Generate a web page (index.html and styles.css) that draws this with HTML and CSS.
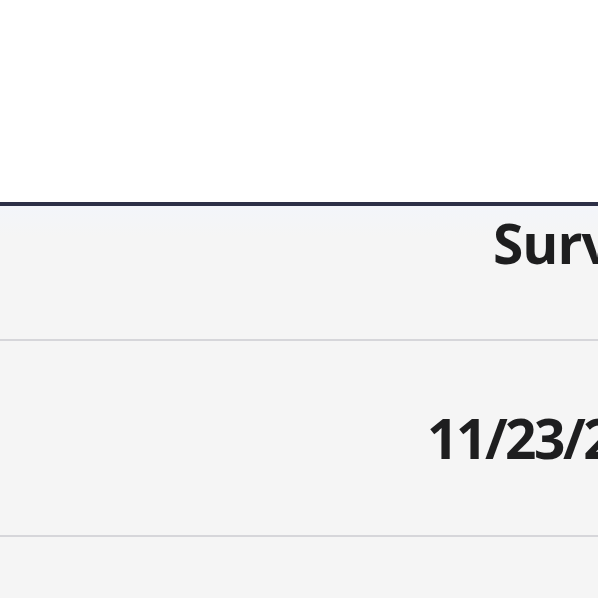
FILE: index.html
```html
<!DOCTYPE html>
<html lang="en">
<head>
<meta charset="utf-8">
<title>Survey table</title>
<link rel="stylesheet" href="styles.css">
</head>
<body>
<div class="page">
  <div class="top-space"></div>
  <table class="grid">
    <colgroup>
      <col class="col-lead">
      <col class="col-date">
      <col class="col-rest">
    </colgroup>
    <thead>
      <tr class="head-row">
        <th></th>
        <th class="cell-date head-date">Survey Date</th>
        <th>Status</th>
      </tr>
    </thead>
    <tbody>
      <tr class="body-row">
        <td></td>
        <td class="cell-date">11/23/2023</td>
        <td>Complete</td>
      </tr>
      <tr class="body-row">
        <td></td>
        <td class="cell-date"></td>
        <td></td>
      </tr>
    </tbody>
  </table>
</div>
</body>
</html>
```
FILE: styles.css
```css
html, body {
  margin: 0;
  padding: 0;
  background: #ffffff;
}
.page {
  width: 598px;
  height: 598px;
  overflow: hidden;
}
.top-space {
  height: 202px;
  background: #ffffff;
}
.grid {
  border-collapse: collapse;
  table-layout: fixed;
  width: 1300px;
  background: #f5f5f5;
  border-top: 4px solid #2d3047;
  font-family: "Open Sans", "Noto Sans", sans-serif;
  color: #1e1e1f;
  font-weight: 700;
  font-size: 55px;
}
.col-lead { width: 427px; }
.col-date { width: 500px; }
.col-rest { width: 373px; }
.grid th, .grid td {
  padding: 0;
  text-align: left;
  vertical-align: middle;
  font-weight: 700;
  white-space: nowrap;
}
.head-row th {
  height: 127px;
  line-height: 61px;
  vertical-align: top;
  padding-top: 6px;
  border-bottom: 2px solid #d6d6da;
  background: linear-gradient(#f3f5fa, #f5f5f5 30px);
}
.head-date {
  padding-left: 66px !important;
  letter-spacing: -1px;
}
.body-row td {
  height: 194px;
  line-height: 64px;
  border-bottom: 2px solid #d6d6da;
}
.body-row .cell-date {
  letter-spacing: -2.5px;
}
```
